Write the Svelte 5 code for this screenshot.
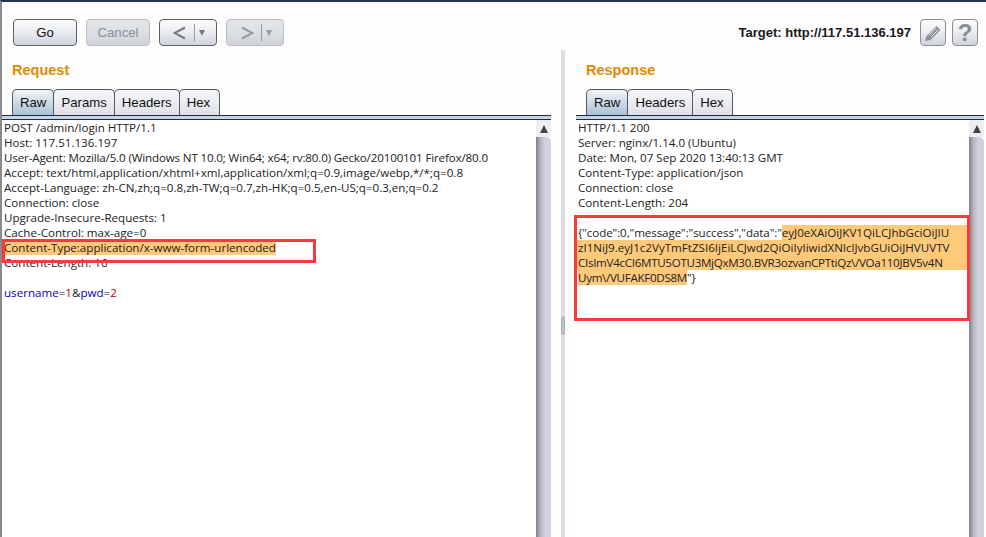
<script>
  const reqLines = [
    "POST /admin/login HTTP/1.1",
    "Host: 117.51.136.197",
    "User-Agent: Mozilla/5.0 (Windows NT 10.0; Win64; x64; rv:80.0) Gecko/20100101 Firefox/80.0",
    "Accept: text/html,application/xhtml+xml,application/xml;q=0.9,image/webp,*/*;q=0.8",
    "Accept-Language: zh-CN,zh;q=0.8,zh-TW;q=0.7,zh-HK;q=0.5,en-US;q=0.3,en;q=0.2",
    "Connection: close",
    "Upgrade-Insecure-Requests: 1",
    "Cache-Control: max-age=0"
  ];
  const resLines = [
    "HTTP/1.1 200",
    "Server: nginx/1.14.0 (Ubuntu)",
    "Date: Mon, 07 Sep 2020 13:40:13 GMT",
    "Content-Type: application/json",
    "Connection: close",
    "Content-Length: 204"
  ];
</script>

<div class="window">
  <div class="toolbar">
    <button class="btn go">Go</button>
    <button class="btn go off">Cancel</button>
    <button class="btn nav">
      <svg width="14" height="14" viewBox="0 0 14 14"><path d="M12 1.5L1.5 7 12 12.5" fill="none" stroke="currentColor" stroke-width="2"/></svg>
      <i></i><span class="drop"></span>
    </button>
    <button class="btn nav off">
      <svg width="14" height="14" viewBox="0 0 14 14"><path d="M2 1.5L12.5 7 2 12.5" fill="none" stroke="currentColor" stroke-width="2"/></svg>
      <i></i><span class="drop"></span>
    </button>
    <span class="target">Target: http://117.51.136.197</span>
    <button class="btn icon">
      <svg width="20" height="20" viewBox="0 0 20 20">
        <path d="M2 18l1.5-5L13.5 3l4 4-10 10z" fill="#8f9196"/>
        <path d="M6 12l7-7M8 14l7-7" stroke="#e8e9ec" stroke-width="1"/>
      </svg>
    </button>
    <button class="btn icon help">?</button>
  </div>

  <div class="panes">
    <section class="pane left">
      <h2>Request</h2>
      <div class="tabs">
        <span class="tab on">Raw</span><span class="tab">Params</span><span class="tab">Headers</span><span class="tab">Hex</span>
      </div>
      <div class="rule"></div>
      <div class="editor">
        <div class="text">
          {#each reqLines as l, i}<div class="line" class:tight={i === 2}>{l}</div>{/each}
          <div class="line"><mark>Content-Type:application/x-www-form-urlencoded</mark></div>
          <div class="line">Content-Length: 16</div>
          <div class="line">&nbsp;</div>
          <div class="line"><span class="k">username</span>=<span class="v">1</span>&amp;<span class="k">pwd</span>=<span class="v">2</span></div>
          <div class="box box-req"></div>
        </div>
        <div class="scroll"><span class="up"></span><span class="thumb"></span></div>
      </div>
    </section>

    <div class="divider"><span class="grip"></span></div>

    <section class="pane right">
      <h2>Response</h2>
      <div class="tabs">
        <span class="tab on">Raw</span><span class="tab">Headers</span><span class="tab">Hex</span>
      </div>
      <div class="rule"></div>
      <div class="editor">
        <div class="text">
          {#each resLines as l}<div class="line">{l}</div>{/each}
          <div class="line">&nbsp;</div>
          <div class="line split"><span class="lead">{'{"code":0,"message":"success","data":"'}</span><mark class="fill">eyJ0eXAiOiJKV1QiLCJhbGciOiJIU</mark></div>
          <div class="line"><mark class="full">zI1NiJ9.eyJ1c2VyTmFtZSI6IjEiLCJwd2QiOiIyIiwidXNlclJvbGUiOiJHVUVTV</mark></div>
          <div class="line"><mark class="full tighter">CIsImV4cCI6MTU5OTU3MjQxM30.BVR3ozvanCPTtiQz\/VOa110JBV5v4N</mark></div>
          <div class="line"><mark class="tighter">Uym\/VUFAKF0DS8M</mark>{'"}'}</div>
          <div class="box box-res"></div>
        </div>
        <div class="scroll"><span class="up"></span><span class="thumb"></span></div>
      </div>
    </section>
  </div>
</div>

<style>
  :global(body) { margin: 0; background: #fff; }
  .window {
    width: 986px; height: 537px; box-sizing: border-box; overflow: hidden;
    background: #fdfdfe; border-top: 2px solid #24344f; border-left: 2px solid #8a8a8a;
    font-family: "Open Sans", "Noto Sans", sans-serif; display: flex; flex-direction: column;
  }
  .toolbar { height: 46px; flex: none; display: flex; align-items: flex-start; padding: 17px 0 0 11px; box-sizing: border-box; }
  .btn {
    height: 27px; padding: 0; margin: 0; box-sizing: border-box; border: 1px solid #5f6164; border-radius: 4px;
    background: linear-gradient(#fafbfc, #eceef2 45%, #cfd3dc); font: 13.2px "Liberation Sans", sans-serif; color: #111;
  }
  .go { width: 64px; margin-right: 9px; }
  .off { border-color: #b9bcc2; color: #8b8d92; background: linear-gradient(#e4e6ea, #dcdfe4 50%, #cfd2d9); }
  .nav { width: 58px; margin-right: 9px; display: flex; align-items: center; padding-left: 13px; color: #77797d; }
  .nav.off { color: #97999d; }
  .nav i { width: 1px; height: 17px; background: #999; margin: 0 4px 0 7px; }
  .drop { width: 0; height: 0; border-left: 3.5px solid transparent; border-right: 3.5px solid transparent; border-top: 6px solid currentColor; }
  .target { margin-left: auto; margin-right: 9px; margin-top: 6px; font: bold 13px "Liberation Sans", sans-serif; color: #1a1a1a; }
  .icon { width: 26px; margin-right: 6px; display: flex; align-items: center; justify-content: center; border-color: #8b8d92; }
  .help { margin-right: 8px; font: bold 24px "Liberation Sans", sans-serif; color: #8a8c90; }

  .panes { flex: 1; display: flex; min-height: 0; }
  .pane { display: flex; flex-direction: column; min-width: 0; }
  .left { width: 549px; }
  .right { flex: 1; padding: 0 2px 0 22px; }
  h2 { margin: 12px 0 0 10px; height: 29px; font: bold 14.5px/20px "Liberation Sans", sans-serif; color: #e58900; }
  .right h2 { margin-left: 0; }
  .tabs { height: 26px; display: flex; padding-left: 10px; align-items: flex-end; }
  .right .tabs { padding-left: 0; }
  .tab {
    height: 26px; box-sizing: border-box; border: 1px solid #55585c; border-bottom: none; border-radius: 5px 5px 0 0;
    padding: 5px 7px 0; font: 13.2px "Liberation Sans", sans-serif; color: #111;
    background: linear-gradient(#f6f7f9, #dfe1e7); margin-right: -1px;
  }
  .tab:last-child { padding-right: 8.5px; }
  .tab.on { background: linear-gradient(#f0f3f6, #a9c1d6); }
  .rule { height: 3px; flex: none; background: #c3d5e6; border-top: 1px solid #1d2a3f; border-bottom: 1px solid #1d2a3f; }
  .right .rule { margin-left: -10px; }
  .editor { flex: 1; display: flex; background: #fff; min-height: 0; }
  .right .editor { margin-left: -10px; }
  .text { position: relative; flex: 1; padding: 0 0 0 2px; font-size: 11.6px; line-height: 15px; color: #222; white-space: nowrap; }
  .line { height: 15px; }
  .tight { letter-spacing: -0.15px; }
  .tighter { letter-spacing: -0.3px; }
  .split { display: flex; }
  .lead { letter-spacing: -0.08px; }
  mark { display: inline-block; height: 15px; vertical-align: top; background: #ffc97a; color: inherit; }
  mark.fill { flex: 1; }
  mark.full { display: block; margin-left: -1px; padding-left: 1px; }
  .k { color: #0000c0; }
  .v { color: #b00000; }
  .box { position: absolute; border: 3px solid #f83a3a; box-sizing: border-box; }
  .box-req { left: 0; top: 119px; width: 314px; height: 24px; }
  .box-res { left: -2px; top: 95px; width: 396px; height: 106px; }
  .scroll { width: 15px; flex: none; display: flex; flex-direction: column; }
  .up { height: 17px; flex: none; background: #eceef1; position: relative; }
  .up::after {
    content: ""; position: absolute; left: 4px; top: 5px; width: 0; height: 0;
    border-left: 4px solid transparent; border-right: 4px solid transparent; border-bottom: 8px solid #444;
  }
  .thumb { flex: 1; background: linear-gradient(90deg, #808185, #b6b7bd 30%, #d0d2d9 60%); border-radius: 0 5px 0 0; }
  .divider { width: 13px; flex: none; position: relative; }
  .divider::before { content: ""; position: absolute; left: 10px; top: 2px; bottom: 0; width: 4px; background: #dcdee6; }
  .grip { position: absolute; left: 10px; top: 268px; width: 4px; height: 19px; background: #c0c3cb; border: 1px solid #aaaeb6; box-sizing: border-box; border-radius: 2px; }
</style>
